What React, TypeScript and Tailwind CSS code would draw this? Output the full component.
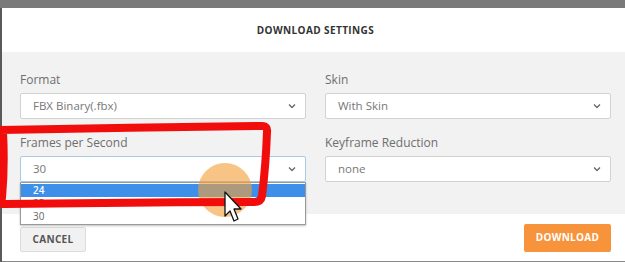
import React from 'react';

const font = { fontFamily: '"Open Sans", "Noto Sans", sans-serif' };

const Chevron = () => (
    <svg width="8" height="5" viewBox="0 0 8 5" className="absolute right-[9px] top-1/2 -translate-y-1/2">
        <path d="M1 1 L4 4 L7 1" fill="none" stroke="#666" strokeWidth="1.3" />
    </svg>
);

const Select = ({ value, focused, children }: { value: string; focused?: boolean; children?: React.ReactNode }) => (
    <div className="relative">
        <div
            className={`relative h-[26px] bg-white border rounded-[2px] flex items-center pl-[12px] text-[11.5px] text-[#777] ${focused ? 'border-[#a9c9e6]' : 'border-[#d2d2d2]'}`}
        >
            {value}
            <Chevron />
        </div>
        {children}
    </div>
);

const Field = ({ label, children }: { label: string; children: React.ReactNode }) => (
    <div className="flex flex-col">
        <label className="h-[16px] leading-[16px] text-[12px] text-[#6e6e6e] mb-[5px]">{label}</label>
        {children}
    </div>
);

export default function App() {
    return (
        <div className="relative w-[625px] h-[262px] overflow-hidden bg-[#7a7a7a]" style={font}>
            <div className="h-[8px]" />
            <div className="border-l-2 border-[#5a5a5a] bg-white">
                <div className="h-[44px] flex items-center justify-center pl-[4px]">
                    <h1 className="text-[10px] font-bold tracking-[0.4px] text-[#333]">DOWNLOAD SETTINGS</h1>
                </div>

                <div className="h-[162px] bg-[#f2f2f2] pl-[18px] pr-[14px] pt-[20px] grid grid-cols-2 gap-x-[19px] content-start">
                    <Field label="Format">
                        <Select value="FBX Binary(.fbx)" />
                    </Field>
                    <Field label="Skin">
                        <Select value="With Skin" />
                    </Field>
                    <div className="col-span-2 h-[16px]" />
                    <Field label="Frames per Second">
                        <Select value="30" focused>
                            <div className="absolute left-0 right-0 top-full z-10 bg-white border border-[#9a9a9a] shadow-[0_1px_2px_rgba(0,0,0,0.25)] text-[10px] text-[#666] pt-[1px] pb-[1px]">
                                <div className="h-[13px] leading-[13px] pl-[12px] bg-[#3d8fea] text-white font-semibold">24</div>
                                <div className="h-[13px] leading-[13px] pl-[12px]">25</div>
                                <div className="h-[13px] leading-[13px] pl-[12px]">30</div>
                            </div>
                        </Select>
                    </Field>
                    <Field label="Keyframe Reduction">
                        <Select value="none" />
                    </Field>
                </div>

                <div className="h-[47px] flex items-center justify-between pl-[18px] pr-[14px]">
                    <button className="h-[25px] w-[66px] mt-[3px] bg-[#f1f1f1] border border-[#dcdcdc] rounded-[2px] text-[10px] font-bold tracking-[0.3px] text-[#555]">
                        CANCEL
                    </button>
                    <button className="h-[28px] w-[87px] bg-[#f7933b] rounded-[2px] text-[10px] font-bold tracking-[0.3px] text-white">
                        DOWNLOAD
                    </button>
                </div>
                <div className="h-[1px] bg-[#8a8a8a]" />
            </div>

            {/* video annotations drawn over the dialog */}
            <svg className="absolute inset-0 z-20 pointer-events-none" width="625" height="262" viewBox="0 0 625 262">
                <circle cx="225" cy="190" r="27" fill="rgba(242,160,60,0.62)" />
                <path
                    d="M-2 130 C 80 128, 180 127, 262 126 Q 268 126 267 132 C 266 160, 264 180, 262 196 Q 261 202 254 202 C 170 202, 80 203, 4 204 Q -1 204 2 198 C 4 175, 4 150, 3 132"
                    fill="none"
                    stroke="#f20d0d"
                    strokeWidth="8"
                    strokeLinecap="round"
                    strokeLinejoin="round"
                />
                <path
                    d="M225 192 L225 216 L230 211 L234 221 L238 219 L234 209 L241 209 Z"
                    fill="#fff"
                    stroke="#111"
                    strokeWidth="1.3"
                    strokeLinejoin="round"
                />
            </svg>
        </div>
    );
}
